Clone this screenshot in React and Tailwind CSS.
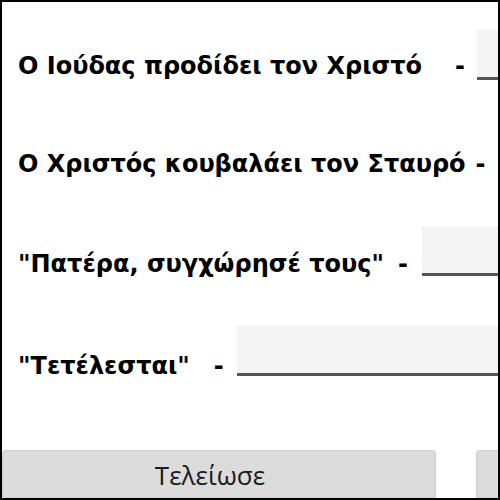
export default function App() {
  const rows = [
    { text: 'Ο Ιούδας προδίδει τον Χριστό', dashGap: 'ml-[33px]', inputGap: 'ml-[12px]', mt: 'mt-[28px]', mb: 'mb-[2px]' },
    { text: 'Ο Χριστός κουβαλάει τον Σταυρό', dashGap: 'ml-[10px]', inputGap: 'ml-[14px]', mt: 'mt-[48px]', mb: 'mb-[2px]' },
    { text: '"Πατέρα, συγχώρησέ τους"', dashGap: 'ml-[14px]', inputGap: 'ml-[14px]', mt: 'mt-[48px]', mb: 'mb-[0px]' },
    { text: '"Τετέλεσται"', dashGap: 'ml-[24px]', inputGap: 'ml-[13px]', mt: 'mt-[50px]', mb: 'mb-[-2px]' },
  ]

  return (
    <div className="w-[500px] h-[500px] border-2 border-black bg-white overflow-hidden flex flex-col">
      {rows.map((r) => (
        <div key={r.text} className={`${r.mt} flex items-end h-[50px] pl-[16px] whitespace-nowrap`}>
          <span className={`${r.mb} font-['DejaVu_Sans',sans-serif] font-bold text-[24px] text-black leading-none`}>
            {r.text}
          </span>
          <span className={`${r.dashGap} ${r.mb} font-['DejaVu_Sans',sans-serif] font-bold text-[24px] text-black leading-none`}>-</span>
          <div className={`${r.inputGap} h-[50px] w-[300px] shrink-0 bg-[#f4f4f4] border-b-[3px] border-[#555]`} />
        </div>
      ))}
      <div className="mt-auto flex gap-[40px] h-[48px]">
        <button className="w-[434px] shrink-0 h-full bg-[#dcdcdc] border border-[#d0d0d0] rounded-t-[3px] font-['Open_Sans',sans-serif] text-[26px] text-[#1a1a1a] pr-[18px] pt-[2px]">
          Τελείωσε
        </button>
        <div className="w-[100px] shrink-0 h-full bg-[#dcdcdc] border border-[#d0d0d0] rounded-t-[3px]" />
      </div>
    </div>
  )
}
